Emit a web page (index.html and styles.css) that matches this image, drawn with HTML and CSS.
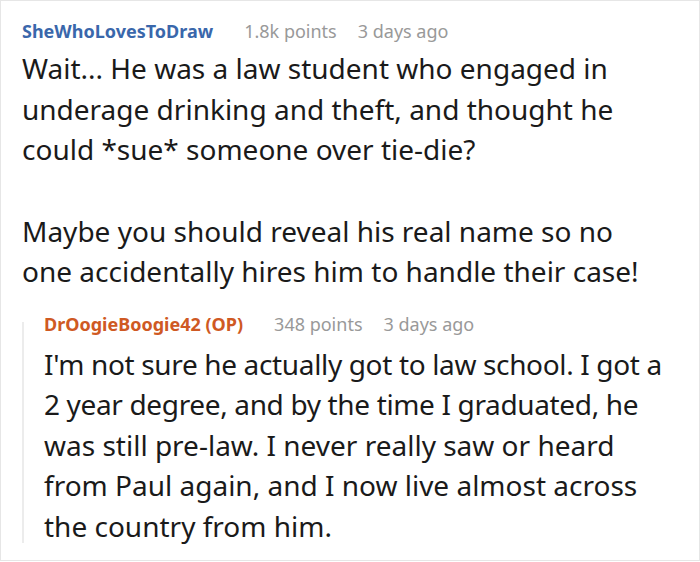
FILE: index.html
```html
<!DOCTYPE html>
<html>
<head>
<meta charset="utf-8">
<link rel="stylesheet" href="styles.css">
</head>
<body>
<div class="thread">
  <div class="comment">
    <div class="meta">
      <span class="author">SheWhoLovesToDraw</span>
      <span class="info">1.8k points</span>
      <span class="info">3 days ago</span>
    </div>
    <div class="body">
      <p>Wait... He was a law student who engaged in underage drinking and theft, and thought he could *sue* someone over tie-die?</p>
      <p>Maybe you should reveal his real name so no one accidentally hires him to handle their case!</p>
    </div>
    <div class="reply">
      <div class="rail"></div>
      <div class="reply-content">
        <div class="meta">
          <span class="author op">DrOogieBoogie42 (OP)</span>
          <span class="info">348 points</span>
          <span class="info">3 days ago</span>
        </div>
        <div class="body">
          <p><span class="tight">I'm not sure he actually got to law school. I got a</span><br><span class="tight">2 year degree, and by the time I graduated, he</span><br>was still pre-law. I never really saw or heard<br>from Paul again, and I now live almost across<br>the country from him.</p>
        </div>
      </div>
    </div>
  </div>
</div>
</body>
</html>
```
FILE: styles.css
```css
html, body {
  margin: 0;
  padding: 0;
  background: #fff;
}
.thread {
  box-sizing: border-box;
  width: 700px;
  height: 561px;
  border: 1px solid #e6e6e6;
  font-family: "Noto Sans", sans-serif;
  color: #1a1a1a;
}
.comment {
  padding: 16px 0 0 21px;
}
.meta {
  display: flex;
  gap: 21px;
  font-size: 18px;
  line-height: 28px;
}
.author {
  font-weight: bold;
  color: #3a67ab;
  margin-right: 10px;
}
.author.op {
  color: #cf5923;
}
.info {
  color: #999;
}
.body {
  font-size: 28px;
  line-height: 40.5px;
  margin-top: 3px;
  width: 630px;
}
.body p {
  margin: 0 0 41px;
}
.body p:last-child {
  margin-bottom: 0;
}
.reply {
  display: flex;
  margin-top: 18px;
}
.rail {
  flex: none;
  width: 2px;
  background: #ececec;
  margin: 12px 20px 3px 0;
}
.reply-content .body {
  width: 650px;
  margin-top: 6px;
  white-space: nowrap;
}
.tight {
  letter-spacing: -0.35px;
}
```
